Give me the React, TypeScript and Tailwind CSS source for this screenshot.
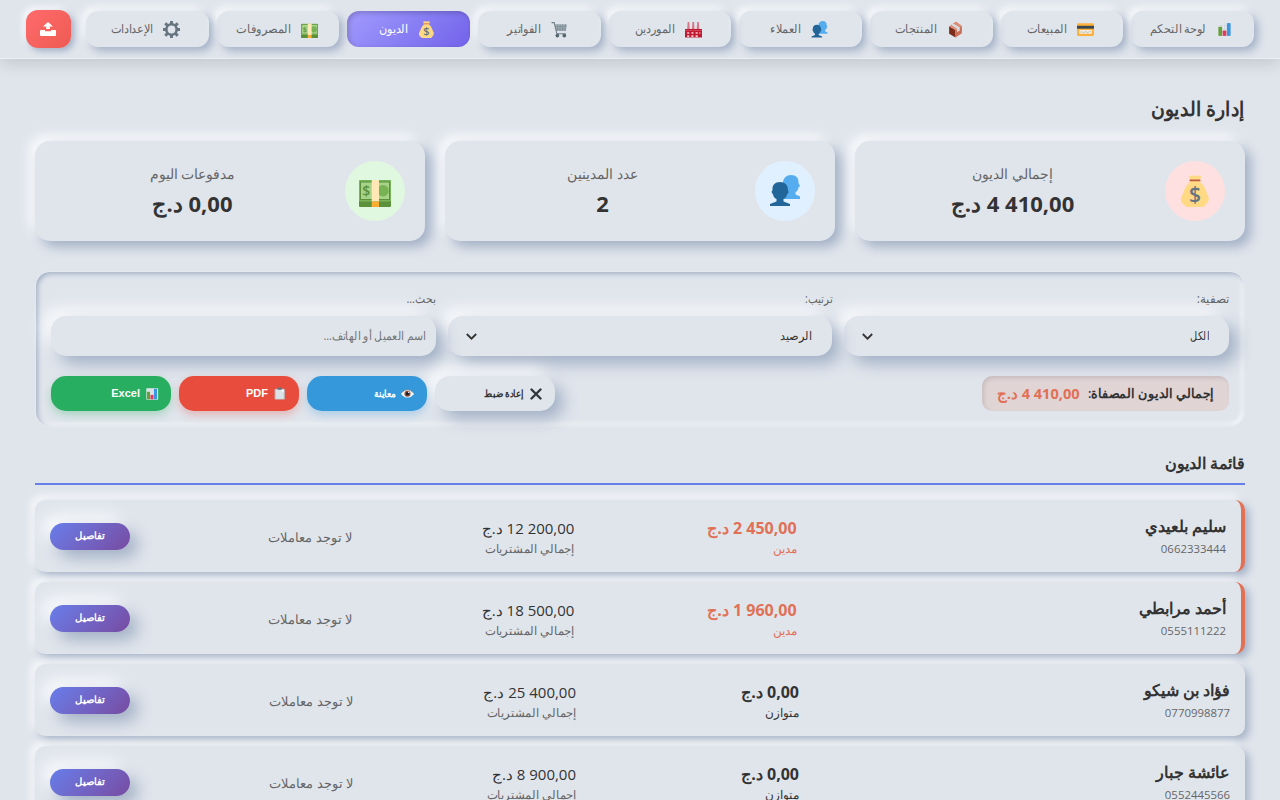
const ChartIcon = ({size}: {size: number}) => (
    <svg width={size} height={size} viewBox="0 0 32 32">
        <rect x="3" y="3" width="27" height="26" rx="1" fill="#e4e9ed"/>
        <path d="M3 9H30M3 15H30M3 21H30M9 3V29M16 3V29M23 3V29" stroke="#c8d2d9"/>
        <rect x="4.500" y="11" width="7" height="17" fill="#689f38"/>
        <rect x="12.5" y="18" width="7" height="10" fill="#e5395b"/>
        <rect x="20.5" y="4" width="7" height="24" fill="#3c96e0"/>
    </svg>
)

const CardIcon = ({size}: {size: number}) => (
    <svg width={size} height={size} viewBox="0 0 32 32">
        <rect y="4" width="32" height="24" rx="2.5" fill="#ffb13b"/>
        <rect y="9" width="32" height="5.5" fill="#37474f"/>
        <rect x="4" y="17" width="24" height="7" rx="1" fill="#f1ecdf"/>
        <path d="M6 21.5Q8 19 10 21T14 21T18 21T22 21T26 20" stroke="#9aa0a2" fill="none"/>
    </svg>
)

const PackageIcon = ({size}: {size: number}) => (
    <svg width={size} height={size} viewBox="0 0 32 32">
        <path d="M4 10 16 17V31L4 24Z" fill="#7a2d1b"/>
        <path d="M16 17 28 9V23L16 31Z" fill="#c96f58"/>
        <path d="M4 10 17 1 28 9 16 17Z" fill="#dd8b72"/>
        <path d="M8 7.500 12 4.500 24 12V18L19 21V14.500Z" fill="#d5dde1"/>
    </svg>
)

const PeopleIcon = ({size}: {size: number}) => (
    <svg width={size} height={size} viewBox="0 0 32 32">
        <path d="M22 0C27 0 30 3 29.5 8L31 11 29.5 12.5C29 15 28 16.5 26.5 17V19.5L31 21.5V24H14V8C14 3 17.500 0 22 0Z" fill="#55acee"/>
        <path d="M11 7C6 7 3 10 3.500 15L2.500 17 4 19.500C4.500 22 6 23.500 7.500 24V26.500L1 29V31H21V29L14.500 26.500V24C16.500 23 17.500 21.500 18 19.500L19.500 17.500 19 15C19 10 16 7 11 7Z" fill="#226699"/>
    </svg>
)

const FactoryIcon = ({size}: {size: number}) => (
    <svg width={size} height={size} viewBox="0 0 32 32">
        <path d="M5 2H8L9 16H4ZM14 2H17L18 16H13ZM23 2H26L27 16H22Z" fill="#d77686"/>
        <path d="M0 15H32V31H0Z" fill="#be1931"/>
        <path d="M0 18H32" stroke="#e56a7a"/>
        <path d="M4 21H8V24H4ZM12 21H16V24H12ZM20 21H24V24H20ZM4 27H8V30H4ZM12 27H16V30H12ZM20 27H24V30H20ZM27 21H29V24H27Z" fill="#f6c9cf"/>
    </svg>
)

const CartIcon = ({size}: {size: number}) => (
    <svg width={size} height={size} viewBox="0 0 32 32">
        <path d="M7 6H30L28 19H10Z" fill="#a3b0b8"/>
        <path d="M12 6V19M17 6V19M22 6V19M27 6 26 19M8 10H29M9 15H28" stroke="#6d7d87"/>
        <path d="M1 3H6L11 24H28" stroke="#6d7d87" strokeWidth="2" fill="none"/>
        <circle cx="12" cy="27.500" r="3.500" fill="#546570"/>
        <circle cx="25" cy="27.500" r="3.500" fill="#546570"/>
    </svg>
)

const MoneyBagIcon = ({size}: {size: number}) => (
    <svg width={size} height={size} viewBox="0 0 32 32">
        <path d="M10 1Q13 0 16 1Q19 0 22 1L21 7C25 10 27 15 28 19C31 23 30 27 27 29Q26 32 23 32H9Q6 32 5 29.500C1 28 1 22 4 19C5 15 7 10 11 7Z" fill="#ffd983"/>
        <rect x="10.500" y="4.500" width="11" height="1.800" rx=".9" fill="#bf5b45"/>
        <text x="16" y="26.500" textAnchor="middle" fontSize="21" fontWeight="600" fill="#67757f">$</text>
    </svg>
)

const BanknoteIcon = ({size}: {size: number}) => (
    <svg width={size} height={size} viewBox="0 0 32 32">
        <rect y="20" width="32" height="12" rx="1" fill="#5c913b"/>
        <rect y="5" width="32" height="21.500" rx="1" fill="#78b259"/>
        <rect x="1.500" y="7" width="29" height="17.500" fill="#a6d388" stroke="#5c913b"/>
        <circle cx="24" cy="15.700" r="5.800" fill="#77b255"/>
        <text x="7.200" y="21" textAnchor="middle" fontSize="14" fontWeight="600" fill="#5c913b">$</text>
        <rect x="12.700" y="5" width="7.300" height="21.500" fill="#ffe8b6"/>
        <rect x="12.700" y="26.500" width="7.300" height="5.500" fill="#ffac33"/>
    </svg>
)

const GearIcon = ({size}: {size: number}) => (
    <svg width={size} height={size} viewBox="0 0 32 32" fill="none" stroke="#66757f">
        <circle cx="16" cy="16" r="9.800" strokeWidth="5"/>
        <path d="M16 0V6M16 26V32M0 16H6M26 16H32M4.200 4.200 9 9M23 23 27.800 27.800M4.200 27.800 9 23M23 9 27.800 4.200" strokeWidth="5.500"/>
    </svg>
)

const CrossIcon = () => (
    <svg width="12" height="12" viewBox="0 0 12 12" fill="none" stroke="#31373d" strokeWidth="2.400" strokeLinecap="round">
        <path d="M1.500 1.500 10.500 10.500M10.500 1.500 1.500 10.500"/>
    </svg>
)

const EyeIcon = () => (
    <svg width="13" height="13" viewBox="0 0 32 32">
        <path d="M0 17Q7 7 16 7T32 17Q25 26 16 26T0 17Z" fill="#f5f8fa"/>
        <path d="M3 13Q9 7 16 7T29 13" stroke="#8b7268" strokeWidth="1.500" fill="none"/>
        <circle cx="16" cy="16.500" r="7.500" fill="#8a4b38"/>
        <circle cx="16" cy="16.500" r="4" fill="#1f1f24"/>
        <circle cx="19" cy="13" r="2" fill="#fff"/>
    </svg>
)

const ClipboardIcon = () => (
    <svg width="13" height="13" viewBox="0 0 32 32">
        <rect x="4" y="4" width="25" height="27" rx="3" fill="#b9c5cc"/>
        <rect x="7" y="7" width="19" height="22" fill="#dbe3e8"/>
        <path d="M19 7H26V14Z" fill="#fff"/>
        <rect x="11" y="1" width="11" height="6" rx="2" fill="#66757f"/>
    </svg>
)

const navItems = [
    {id: 1, Icon: ChartIcon, label: "لوحة التحكم"},
    {id: 2, Icon: CardIcon, label: "المبيعات"},
    {id: 3, Icon: PackageIcon, label: "المنتجات"},
    {id: 4, Icon: PeopleIcon, label: "العملاء"},
    {id: 5, Icon: FactoryIcon, label: "الموردين"},
    {id: 6, Icon: CartIcon, label: "الفواتير"},
    {id: 7, Icon: MoneyBagIcon, label: "الديون", active: true},
    {id: 8, Icon: BanknoteIcon, label: "المصروفات"},
    {id: 9, Icon: GearIcon, label: "الإعدادات"},
]

// amounts use a no-break space so the digits stay in one left-to-right run
const stats = [
    {id: 1, Icon: MoneyBagIcon, color: "bg-[#ffe0e0]", label: "إجمالي الديون", value: "4\u00a0410,00 د.ج"},
    {id: 2, Icon: PeopleIcon, color: "bg-[#e0f0ff]", label: "عدد المدينين", value: "2"},
    {id: 3, Icon: BanknoteIcon, color: "bg-[#e0f7e0]", label: "مدفوعات اليوم", value: "0,00 د.ج"},
]

const customers = [
    {id: 1, name: "سليم بلعيدي", phone: "0662333444", balance: "2\u00a0450,00 د.ج", total: "12\u00a0200,00 د.ج", debtor: true},
    {id: 2, name: "أحمد مرابطي", phone: "0555111222", balance: "1\u00a0960,00 د.ج", total: "18\u00a0500,00 د.ج", debtor: true},
    {id: 3, name: "فؤاد بن شيكو", phone: "0770998877", balance: "0,00 د.ج", total: "25\u00a0400,00 د.ج", debtor: false},
    {id: 4, name: "عائشة جبار", phone: "0552445566", balance: "0,00 د.ج", total: "8\u00a0900,00 د.ج", debtor: false},
]

const Chevron = () => (
    <svg width="11" height="7" viewBox="0 0 11 7" fill="none" stroke="#333" strokeWidth="1.800" className="-ml-[2px]">
        <path d="M.8 1 5.500 5.700 10.200 1"/>
    </svg>
)

const Navbar = () => {
    return (
        <nav className="flex items-center gap-[15px] h-[59px] px-[26px] bg-[#e0e5ec] border-b border-white/40 shadow-[0_4px_16px_rgba(0,0,0,0.14)]">
            <div className="grid grid-cols-9 flex-1 gap-2">
                {navItems.map(({id, Icon, label, active}) => (
                    <div
                        key={id}
                        className={`flex items-center justify-center gap-[10px] h-9 ps-[3px] rounded-xl text-[12px] ${active
                            ? "text-white bg-linear-135 from-[#a29bfe] to-[#7262e9] shadow-[inset_2px_2px_5px_rgba(0,0,0,0.2)]"
                            : "text-[#666] shadow-[4px_4px_8px_#a3b1c6,-4px_-4px_8px_rgba(255,255,255,0.8)]"}`}
                    >
                        <Icon size={17}/>
                        <span className="-me-[3px] whitespace-nowrap origin-right scale-x-94">{label}</span>
                    </div>
                ))}
            </div>
            <button className="flex items-center justify-center w-[45px] h-[38px] rounded-xl bg-linear-135 from-[#ff6b6b] to-[#ee5a52] shadow-[3px_3px_6px_#a3b1c6,-3px_-3px_6px_rgba(255,255,255,0.8)]">
                <svg width="16" height="14" viewBox="0 0 16 14" fill="#fff" className="mr-px">
                    <path d="M8 0 13 4.500H9.800V7H6.200V4.500H3Z"/>
                    <path d="M0 9Q0 8 1 8H5V9.200H11V8H15Q16 8 16 9V13Q16 14 15 14H1Q0 14 0 13Z"/>
                </svg>
            </button>
        </nav>
    )
}

const App = () => {
    return (
        <div
            dir="rtl"
            className="h-[800px] overflow-hidden bg-[#e0e5ec] text-[#333] font-['Open_Sans','Noto_Sans',sans-serif]"
        >
            <Navbar/>
            <main className="px-[35px] pt-[35px]">
                <h1 className="h-[30px] mb-[17px] text-[20px] leading-[30px] font-semibold origin-right scale-x-94">إدارة الديون</h1>
                <div className="grid grid-cols-3 gap-5">
                    {stats.map(({id, Icon, color, label, value}) => (
                        <div
                            key={id}
                            className="flex items-center gap-[15px] h-[100px] p-5 rounded-[15px] bg-[#e0e5ec] shadow-[6px_6px_12px_#a3b1c6,-6px_-6px_12px_rgba(255,255,255,0.8)]"
                        >
                            <div className={`flex items-center justify-center size-[60px] rounded-full ${color}`}>
                                <Icon size={32}/>
                            </div>
                            <div className="flex-1 text-center">
                                <p className="text-[13.8px] leading-5 text-[#666]">{label}</p>
                                <p className="mt-[4px] mb-px text-[22px] leading-[30px] font-bold">{value}</p>
                            </div>
                        </div>
                    ))}
                </div>

                <section className="h-[156px] mt-[30px] p-[15px] border border-white/20 rounded-[15px] shadow-[inset_2px_2px_5px_#a3b1c6,inset_-2px_-2px_5px_rgba(255,255,255,0.8)]">
                    <div className="grid grid-cols-3 gap-3 text-[12px]">
                        <div>
                            <p className="h-[29px] leading-6 text-[#666]">تصفية:</p>
                            <div className="flex items-center justify-between h-10 px-5 rounded-[15px] bg-[#e0e5ec] shadow-[8px_8px_16px_#a3b1c6,-8px_-8px_16px_rgba(255,255,255,0.8)]">
                                <span className="origin-right scale-x-82">الكل</span>
                                <Chevron/>
                            </div>
                        </div>
                        <div>
                            <p className="h-[29px] leading-6 text-[#666] origin-right scale-x-86">ترتيب:</p>
                            <div className="flex items-center justify-between h-10 px-5 rounded-[15px] bg-[#e0e5ec] shadow-[8px_8px_16px_#a3b1c6,-8px_-8px_16px_rgba(255,255,255,0.8)]">
                                <span className="origin-right scale-x-94">الرصيد</span>
                                <Chevron/>
                            </div>
                        </div>
                        <div>
                            <p className="h-[29px] leading-6 text-[#666] origin-right scale-x-90">بحث...</p>
                            <div className="flex items-center h-10 px-[10px] rounded-[15px] bg-[#e0e5ec] text-[#757575] shadow-[8px_8px_16px_#a3b1c6,-8px_-8px_16px_rgba(255,255,255,0.8)]">
                                <span className="origin-right scale-x-90">اسم العميل أو الهاتف...</span>
                            </div>
                        </div>
                    </div>
                    <div className="flex justify-between mt-5">
                        <div className="flex items-center gap-2 w-[247px] h-[35px] px-[15px] rounded-[10px] bg-[#e17055]/15 text-[13px] font-semibold whitespace-nowrap shadow-[inset_2px_2px_4px_rgba(0,0,0,0.1)]">
                            <span className="-me-1 origin-right scale-x-97">إجمالي الديون المصفاة:</span>
                            <span className="text-[14.6px] font-bold text-[#e17055]">4&nbsp;410,00 د.ج</span>
                        </div>
                        <div className="flex gap-2 text-[11px] font-bold font-['Liberation_Sans',sans-serif]">
                            <button className="flex items-center gap-[6px] w-[120px] h-[35px] px-[13px] rounded-[15px] bg-[#e0e5ec] shadow-[8px_8px_16px_#a3b1c6,-8px_-8px_16px_rgba(255,255,255,0.8)]">
                                <CrossIcon/>
                                <span className="text-[10px] origin-right scale-x-88">إعادة ضبط</span>
                            </button>
                            <button className="flex items-center gap-[5px] w-[120px] h-[35px] px-[13px] rounded-[15px] bg-[#3498db] text-white shadow-[0_4px_8px_rgba(52,152,219,0.3)]">
                                <EyeIcon/>
                                <span className="text-[10px] origin-right scale-x-90">معاينة</span>
                            </button>
                            <button className="flex items-center gap-[5px] w-[120px] h-[35px] px-[13px] rounded-[15px] bg-[#e74c3c] text-white shadow-[0_4px_8px_rgba(231,76,60,0.3)]">
                                <ClipboardIcon/>
                                <span>PDF</span>
                            </button>
                            <button className="flex items-center gap-[5px] w-[120px] h-[35px] px-3 rounded-[15px] bg-[#27ae60] text-white shadow-[0_4px_8px_rgba(39,174,96,0.3)]">
                                <ChartIcon size={14}/>
                                <span>Excel</span>
                            </button>
                        </div>
                    </div>
                </section>

                <h2 className="h-[32px] mt-[24px] text-[16px] leading-6 font-semibold">قائمة الديون</h2>
                <div className="h-[2px] mb-[15px] bg-[#667eea]"/>
                <div className="flex flex-col gap-[10px]">
                    {customers.map(({id, name, phone, balance, total, debtor}) => (
                        <div
                            key={id}
                            className={`grid grid-cols-[2fr_1fr_1fr_1fr_80px] items-center gap-[15px] h-[72px] px-[15px] rounded-[10px] bg-[#e0e5ec] shadow-[4px_4px_8px_#a3b1c6,-4px_-4px_8px_rgba(255,255,255,0.8)] ${debtor ? "border-r-4 border-[#e17055]" : ""}`}
                        >
                            <div className="pt-px">
                                <p className="text-[16px] leading-6 font-semibold">{name}</p>
                                <p className="text-[11.4px] leading-[22px] text-[#666]">{phone}</p>
                            </div>
                            <div className={debtor ? "pt-[2px] text-[#e17055]" : "pt-[2px]"}>
                                <p className="text-[16px] leading-6 font-bold">{balance}</p>
                                <p className="text-[12px] leading-[18px]">{debtor ? "مدين" : "متوازن"}</p>
                            </div>
                            <div className="pt-[2px]">
                                <p className="text-[15px] leading-6">{total}</p>
                                <p className="text-[12px] leading-[18px] text-[#666] origin-right scale-x-97">إجمالي المشتريات</p>
                            </div>
                            <p className="mt-[3px] text-[13px] text-[#666]">لا توجد معاملات</p>
                            <button className="h-[27px] pb-px rounded-[15px] bg-linear-135 from-[#667eea] to-[#764ba2] text-white text-[10px] font-bold shadow-[8px_8px_16px_#a3b1c6,-8px_-8px_16px_rgba(255,255,255,0.8)]">تفاصيل</button>
                        </div>
                    ))}
                </div>
            </main>
        </div>
    )
}
export default App
